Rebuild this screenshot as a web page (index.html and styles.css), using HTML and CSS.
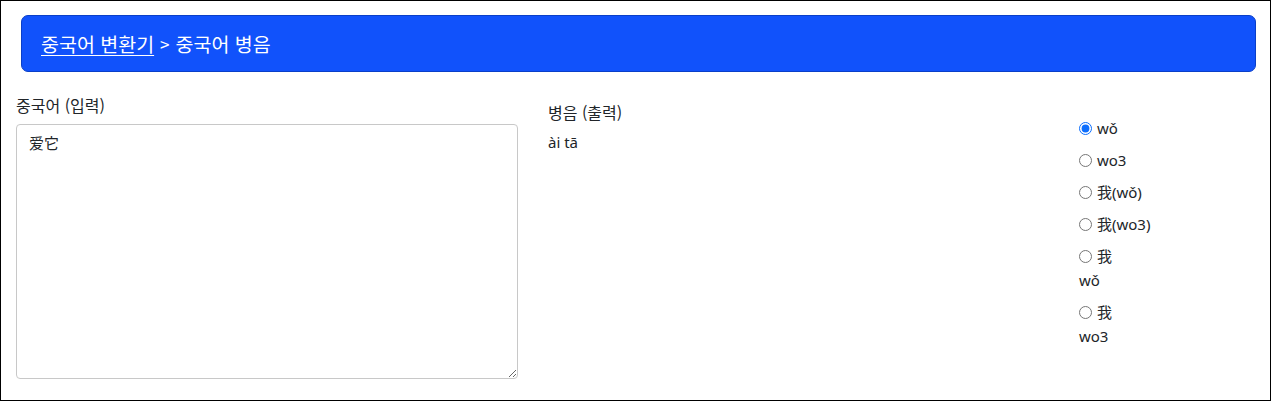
FILE: index.html
```html
<!DOCTYPE html>
<html lang="ko">
<head>
<meta charset="utf-8">
<title>중국어 병음</title>
<link rel="stylesheet" href="styles.css">
</head>
<body>
<div class="frame">
  <div class="header">
    <a href="#" class="crumb-link">중국어 변환기</a><span class="sep">&gt;</span><span class="crumb">중국어 병음</span>
  </div>
  <div class="row">
    <div class="col-input">
      <label class="label" for="src">중국어 (입력)</label>
      <textarea id="src" class="input">爱它</textarea>
    </div>
    <div class="col-output">
      <div class="label out-label">병음 (출력)</div>
      <div class="output">ài tā</div>
    </div>
    <div class="col-options">
      <label class="opt"><input type="radio" name="fmt" checked><span>wǒ</span></label>
      <label class="opt"><input type="radio" name="fmt"><span>wo3</span></label>
      <label class="opt"><input type="radio" name="fmt"><span>我(wǒ)</span></label>
      <label class="opt"><input type="radio" name="fmt"><span>我(wo3)</span></label>
      <label class="opt multi"><span class="line"><input type="radio" name="fmt"><span>我</span></span><span class="line">wǒ</span></label>
      <label class="opt multi"><span class="line"><input type="radio" name="fmt"><span>我</span></span><span class="line">wo3</span></label>
    </div>
  </div>
</div>
</body>
</html>
```
FILE: styles.css
```css
html, body {
  margin: 0;
  padding: 0;
  background: #fff;
}
body {
  font-family: "Noto Sans", "Noto Sans CJK KR", sans-serif;
  font-size: 15px;
  color: #212529;
}
.frame {
  box-sizing: border-box;
  width: 1271px;
  height: 401px;
  border: 1px solid #000;
  padding: 14px 15px 0 15px;
}
.header {
  box-sizing: border-box;
  margin-left: 5px;
  width: 1235px;
  height: 57px;
  background: #1152fb;
  border: 1px solid #0a3fc8;
  border-radius: 7px;
  padding: 0 19px;
  display: flex;
  align-items: center;
  color: #fff;
  font-size: 19.5px;
  font-family: "Noto Sans CJK KR", "Noto Sans", sans-serif;
}
.crumb-link {
  color: #fff;
  text-decoration: underline;
  text-underline-offset: 3px;
}
.sep {
  margin: 0 6px;
  font-size: 17px;
}
.row {
  display: flex;
  margin-top: 22px;
}
.label {
  display: block;
  font-family: "Noto Sans CJK KR", "Noto Sans", sans-serif;
  font-size: 16px;
  line-height: 22px;
  height: 22px;
}
.col-input {
  width: 502px;
  display: flex;
  flex-direction: column;
}
.input {
  box-sizing: border-box;
  margin-top: 8px;
  width: 502px;
  height: 255px;
  border: 1px solid #c8c8c8;
  border-radius: 4px;
  padding: 7px 12px;
  font-family: "Noto Sans CJK SC", sans-serif;
  font-size: 15px;
  line-height: 22px;
  color: #212529;
  resize: both;
  outline: none;
}
.col-output {
  width: 530px;
  margin-left: 30px;
  padding-top: 7px;
}
.output {
  margin-top: 8px;
  line-height: 22px;
}
.col-options {
  padding-left: 1px;
  padding-top: 22px;
  display: flex;
  flex-direction: column;
  gap: 8px;
}
.opt {
  display: flex;
  align-items: center;
  line-height: 24px;
  font-family: "Noto Sans", "Noto Sans CJK SC", sans-serif;
}
.opt.multi {
  flex-direction: column;
  align-items: flex-start;
}
.line {
  display: flex;
  align-items: center;
  line-height: 24px;
}
.opt input {
  margin: 0 5px 0 0;
  width: 13px;
  height: 13px;
  accent-color: #0d6efd;
}
```
